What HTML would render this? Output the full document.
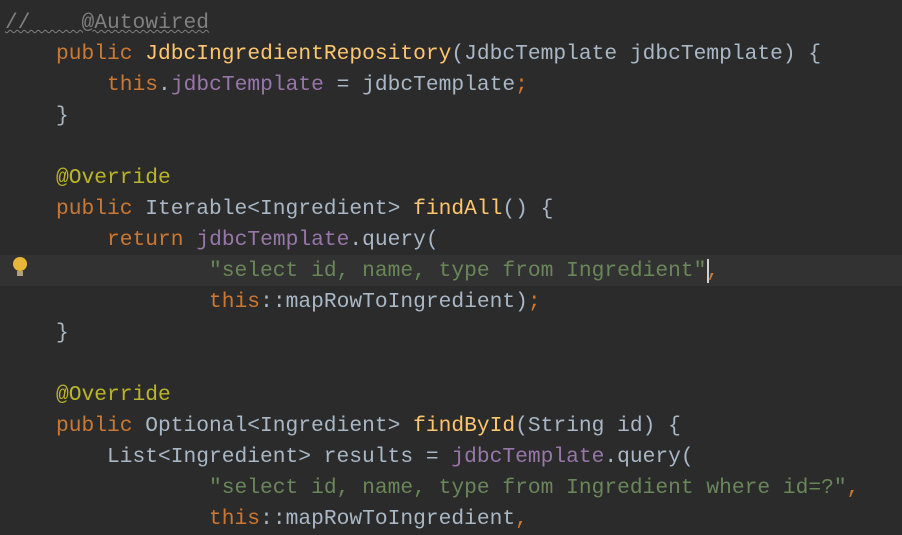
<!DOCTYPE html>
<html><head><style>
html,body{margin:0;padding:0;background:#2b2b2b;width:902px;height:512px;overflow:hidden}
.hl{position:absolute;left:0;top:255px;width:902px;height:31px;background:#323232}
pre{position:absolute;left:5px;top:8px;margin:0;font-family:"Liberation Mono",monospace;font-size:21.25px;line-height:31px;color:#a9b7c6}
.k{color:#cc7832}.f{color:#ffc66d}.p{color:#9876aa}.s{color:#6a8759}.a{color:#bbb529}.c{color:#808080}
.u{text-decoration:underline wavy #808080;text-decoration-thickness:1px}
.bulb{position:absolute;left:13px;top:257px;width:14px;height:14px;border-radius:50%;background:#e8b73a}
.bulb:after{content:"";position:absolute;left:4px;top:14px;width:6px;height:5px;background:#b0a080}
.caret{position:absolute;left:707px;top:259px;width:2px;height:24px;background:#d0d0d0}
</style></head><body>
<div class="hl"></div>
<div class="bulb"></div>
<pre><span class="c u">//    @Autowired</span>
    <span class="k">public</span> <span class="f">JdbcIngredientRepository</span>(JdbcTemplate jdbcTemplate) {
        <span class="k">this</span>.<span class="p">jdbcTemplate</span> = jdbcTemplate<span class="k">;</span>
    }

    <span class="a">@Override</span>
    <span class="k">public</span> Iterable&lt;Ingredient&gt; <span class="f">findAll</span>() {
        <span class="k">return</span> <span class="p">jdbcTemplate</span>.query(
                <span class="s">"select id, name, type from Ingredient"</span><span class="k">,</span>
                <span class="k">this</span>::mapRowToIngredient)<span class="k">;</span>
    }

    <span class="a">@Override</span>
    <span class="k">public</span> Optional&lt;Ingredient&gt; <span class="f">findById</span>(String id) {
        List&lt;Ingredient&gt; results = <span class="p">jdbcTemplate</span>.query(
                <span class="s">"select id, name, type from Ingredient where id=?"</span><span class="k">,</span>
                <span class="k">this</span>::mapRowToIngredient<span class="k">,</span></pre>
<div class="caret"></div>
</body></html>
